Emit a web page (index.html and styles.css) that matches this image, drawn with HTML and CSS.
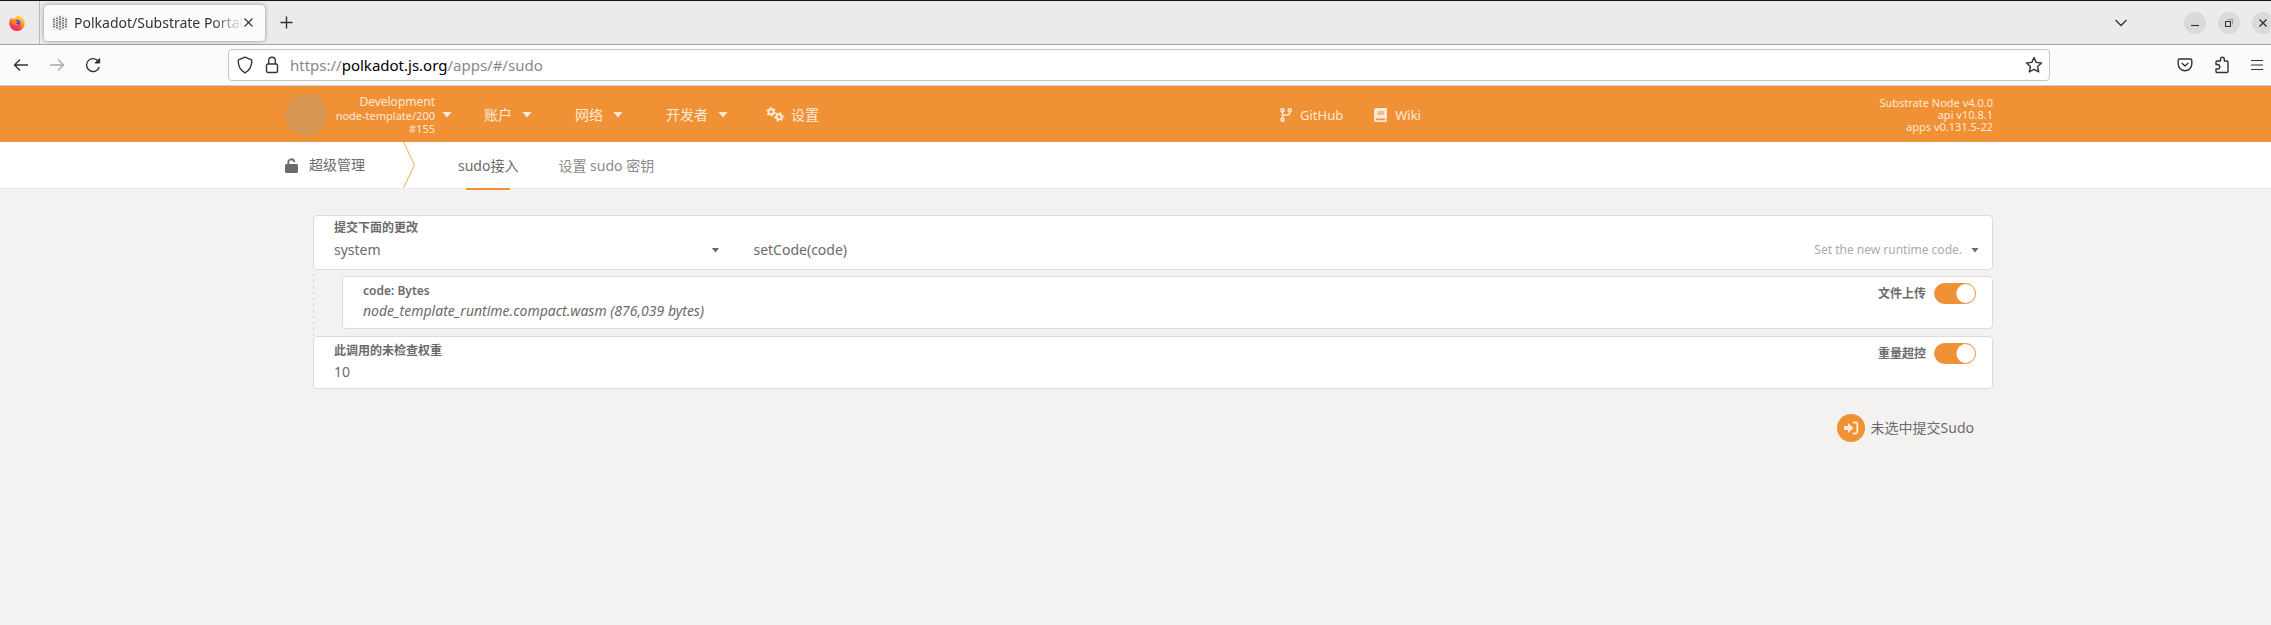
FILE: index.html
```html
<!DOCTYPE html>
<html lang="zh-CN">
<head>
<meta charset="utf-8">
<title>Polkadot/Substrate Portal</title>
<link rel="stylesheet" href="styles.css">
</head>
<body>
<div class="tabbar">
  <div class="pinned">
    <svg width="16" height="16" viewBox="0 0 16 16" aria-label="Firefox">
      <defs>
        <linearGradient id="fx" x1="0.8" y1="0" x2="0.3" y2="1"><stop offset="0" stop-color="#fff04a"/><stop offset=".45" stop-color="#ff9a2b"/><stop offset=".75" stop-color="#ff3b4a"/><stop offset="1" stop-color="#f0207a"/></linearGradient>
      </defs>
      <path fill="url(#fx)" d="M10 0c.2 1.300 1.300 2 2.300 3 .3-.2.300-.7.300-1C14.600 3.500 15.800 6 15.800 8.300A7.800 7.700 0 0 1 .2 8.300C.2 5.800 1.200 4 2.300 2.500c0 .6.200 1 .5 1.300C4 3.300 5.200 3.300 6.200 3.600 7.400 1.500 8.300.6 10 0z"/>
      <circle cx="8" cy="8" r="3.300" fill="#6a3fd8"/>
      <path fill="#ff8a1c" d="M3 5c2-.8 3.600 0 4.300.9 1 .1 2 .2 2 .8C8.600 7.400 7.600 7 7 8c.3 1.300 2 1.600 3.400.8C9.500 11 5.500 11.500 4.300 8.700 3.800 7.500 3.200 6.400 3 5z"/>
    </svg>
  </div>
  <div class="tab">
    <svg width="16" height="16" viewBox="0 0 16 16">
      <rect width="16" height="16" fill="#f1f1f1"/>
      <g fill="none" stroke="#333" stroke-width="1.600" stroke-linecap="round" stroke-dasharray="0 2.400">
        <path d="M2 4.400v7.300M5 3.200v9.700M8 2v12.100M11 3.200v9.700M14 4.400v7.300"/>
      </g>
      <circle cx="8" cy="8" r="1.300" fill="#e070b8"/>
    </svg>
    <span class="tab-title">Polkadot/Substrate Portal</span>
    <button class="plain" aria-label="Close tab"><svg width="9" height="9" viewBox="0 0 9 9" class="line thin"><path d="M.5.5l8 8M8.500.5l-8 8"/></svg></button>
  </div>
  <button class="plain new-tab" aria-label="New tab"><svg width="13" height="13" viewBox="0 0 13 13" class="line"><path d="M6.500 0.500v12M0.500 6.500h12"/></svg></button>
  <div class="window-controls">
    <button class="plain all-tabs" aria-label="All tabs"><svg width="14" height="8" viewBox="0 0 14 8" class="line"><path d="M1.500 1l5.500 5.500L12.500 1"/></svg></button>
    <button class="round" aria-label="Minimize"><svg width="8" height="8" viewBox="0 0 8 8" class="line thin"><path d="M0 6.500h8"/></svg></button>
    <button class="round" aria-label="Restore"><svg width="8" height="8" viewBox="0 0 8 8" class="line thin"><path d="M.5 2.500h5v5h-5z"/><path d="M2.500.5h5v5" stroke="#999"/></svg></button>
    <button class="round" aria-label="Close"><svg width="8" height="8" viewBox="0 0 8 8" class="line"><path d="M.5.5l7 7M7.500.5l-7 7"/></svg></button>
  </div>
</div>
<div class="toolbar">
  <div class="nav-buttons">
    <button class="plain" aria-label="Back"><svg width="16" height="16" viewBox="0 0 16 16" class="line"><path d="M15 8H1.500M7 2.500L1.500 8 7 13.500"/></svg></button>
    <button class="plain faded" aria-label="Forward"><svg width="16" height="16" viewBox="0 0 16 16" class="line"><path d="M1 8h13.500M9 2.500L14.500 8 9 13.500"/></svg></button>
    <button class="plain" aria-label="Reload"><svg width="16" height="16" viewBox="0 0 16 16" class="line"><path d="M13.500 4.500A6.500 6.500 0 1 0 14.300 10"/><path d="M14.700 1.500V6H10z" fill="#333" stroke-width="1"/></svg></button>
  </div>
  <div class="urlbar">
    <svg width="16" height="18" viewBox="0 0 16 18" class="line"><path d="M8 1.200l6 2.500c.6.300.9.700.8 1.300C14.600 10.500 12.500 14.500 8 16.800 3.500 14.500 1.400 10.500 1.200 5c0-.6.200-1 .8-1.300z"/></svg>
    <svg width="14" height="18" viewBox="0 0 14 18" class="line"><rect x="1.500" y="8" width="11" height="8.500" rx="1.500"/><path d="M3.700 8V4.500a3.300 3.300 0 0 1 6.600 0V8"/></svg>
    <div class="url">https://<b>polkadot.js.org</b>/apps/#/sudo</div>
    <button class="plain" aria-label="Bookmark"><svg width="18" height="18" viewBox="0 0 18 18" class="line"><path d="M9 1.500l2.200 4.900 5.300.6-3.900 3.600 1.100 5.300L9 13.300l-4.700 2.600 1.100-5.300L1.500 7l5.300-.6z"/></svg></button>
  </div>
  <div class="tools">
    <button class="plain" aria-label="Pocket"><svg width="16" height="16" viewBox="0 0 16 16" class="line"><path d="M2.500 2h11c.8 0 1.300.5 1.300 1.300V7A6.800 6.800 0 0 1 1.200 7V3.300C1.200 2.500 1.700 2 2.500 2z"/><path d="M4.700 6L8 9l3.300-3"/></svg></button>
    <button class="plain" aria-label="Extensions"><svg width="16" height="18" viewBox="0 0 16 18" class="line"><path d="M2 8.500V6c0-.7.400-1 1-1h3.500V3.200a1.900 1.900 0 0 1 3.800 0V5H13c.7 0 1 .4 1 1v9.500c0 .6-.4 1-1 1H3c-.6 0-1-.4-1-1V13h1.500a2.200 2.200 0 0 0 0-4.500z"/></svg></button>
    <button class="plain" aria-label="Menu"><svg width="12" height="12" viewBox="0 0 12 12" class="line thin"><path d="M0 1.500h12M0 6h12M0 10.500h12"/></svg></button>
  </div>
</div>

<header class="menu">
  <div class="wrap menu-row">
    <button class="chain">
      <span class="chain-logo"></span>
      <span class="chain-info"><span class="chain-name">Development</span><span>node-template/200</span><span>#155</span></span>
      <span class="caret"></span>
    </button>
    <nav class="menu-items">
      <button>账户<span class="caret"></span></button>
      <button>网络<span class="caret"></span></button>
      <button>开发者<span class="caret"></span></button>
      <a href="#settings"><svg width="18" height="15" viewBox="0 0 18 15" fill="none" stroke="currentColor"><circle cx="5" cy="4.800" r="2.500" stroke-width="2"/><circle cx="5" cy="4.800" r="4" stroke-width="1.500" stroke-dasharray="2.200 1.989"/><circle cx="13" cy="9.800" r="2.500" stroke-width="2"/><circle cx="13" cy="9.800" r="4" stroke-width="1.500" stroke-dasharray="2.200 1.989" transform="rotate(30 13 9.800)"/></svg>设置</a>
    </nav>
    <nav class="external">
      <a href="#github"><svg width="12" height="14" viewBox="0 0 12 14" fill="none" stroke="currentColor" stroke-width="1.600"><circle cx="2.500" cy="2.300" r="1.500"/><circle cx="9.700" cy="2.300" r="1.500"/><circle cx="2.500" cy="11.700" r="1.500"/><path d="M2.500 4v6M9.700 4v.8c0 1.500-.8 2.200-2.200 2.200H4.500c-1.300 0-2 .6-2 2"/></svg>GitHub</a>
      <a href="#wiki"><svg width="13" height="14" viewBox="0 0 13 14" fill="currentColor"><path fill-rule="evenodd" d="M2.500 0H12c.6 0 1 .4 1 1v8.500c0 .4-.2.600-.5.800v1.900c.6.300.6 1.800-.4 1.800H2.600A2.600 2.600 0 0 1 0 11.400V2.600C0 1.200 1.100 0 2.500 0zM3.500 3.500v1h6.500v-1zm0 2v1h6.500v-1zM2.600 10.500c-1.200 0-1.200 1.800 0 1.800h8.300v-1.800z"/></svg>Wiki</a>
    </nav>
    <div class="versions"><div>Substrate Node v4.0.0</div><div>api v10.8.1</div><div>apps v0.131.5-22</div></div>
  </div>
</header>

<nav class="tabs">
  <div class="wrap tabs-row">
    <div class="section"><svg width="13" height="15" viewBox="0 0 13 15"><rect x="0" y="6" width="13" height="9" rx="1.500" fill="currentColor"/><path d="M3.300 7V4.200a3 3 0 0 1 5.900-.7" fill="none" stroke="currentColor" stroke-width="1.800" stroke-linecap="round"/></svg>超级管理</div>
    <svg class="divider" width="12" height="46" viewBox="0 0 12 46"><path d="M.5 0L11.500 23 .5 46" fill="none" stroke="#f3a961"/></svg>
    <a class="active" href="#sudo">sudo接入</a>
    <a href="#key">设置 sudo 密钥</a>
  </div>
</nav>

<main class="wrap content">
  <section class="card call">
    <div class="field section-field">
      <label for="section">提交下面的更改</label>
      <div class="picker"><select id="section"><option>system</option></select><span class="caret small"></span></div>
    </div>
    <div class="field method-field">
      <div class="picker"><select id="method" aria-label="method"><option>setCode(code)</option></select><span class="hint">Set the new runtime code.</span><span class="caret small"></span></div>
    </div>
  </section>
  <div class="params">
    <section class="card">
      <div class="field">
        <label for="file">code: Bytes</label>
        <button id="file" class="file">node_template_runtime.compact.wasm (876,039 bytes)</button>
      </div>
      <label class="toggle">文件上传<input type="checkbox" checked></label>
    </section>
  </div>
  <section class="card">
    <div class="field">
      <label for="weight">此调用的未检查权重</label>
      <input id="weight" class="text" type="text" value="10">
    </div>
    <label class="toggle">重量超控<input type="checkbox" checked></label>
  </section>
  <div class="actions">
    <button class="submit"><span class="submit-icon"><svg width="16" height="14" viewBox="0 0 16 14"><path d="M1 5.500q0-.5.500-.5H5V2.700q0-.7.600-.2L10 6.500q.5.500 0 1l-4.400 4q-.6.500-.6-.2V9H1.500Q1 9 1 8.500z" fill="currentColor"/><path d="M10.500 1.500h2.300c.9 0 1.500.6 1.500 1.500v8c0 .9-.6 1.500-1.500 1.500h-2.300" fill="none" stroke="currentColor" stroke-width="1.800" stroke-linecap="round"/></svg></span>未选中提交Sudo</button>
  </div>
</main>
</body>
</html>
```

FILE: styles.css
```css
* { box-sizing: border-box; }
body {
  margin: 0;
  min-height: 100vh;
  background: #f4f2f1;
  color: #6b6b6b;
  font: 14px/20px "Noto Sans", "Noto Sans CJK SC", sans-serif;
}
button, input, select { font: inherit; color: inherit; }
button { border: 0; padding: 0; background: none; }
a { color: inherit; text-decoration: none; }
svg { display: block; flex: none; }
.line { fill: none; stroke: #333; stroke-width: 1.4; stroke-linejoin: round; }
.line.thin { stroke-width: 1.1; }
.plain { display: flex; }
.wrap { max-width: 1715px; margin: 0 auto; }

/* browser frame */
.tabbar {
  display: flex;
  align-items: center;
  height: 45px;
  border-top: 1px solid #17131a;
  border-bottom: 1px solid #a5a5a5;
  background: #ebebeb;
}
.pinned {
  display: flex;
  align-items: center;
  align-self: stretch;
  width: 40px;
  padding-left: 9px;
  border-right: 1px solid #bbb;
}
.tab {
  display: flex;
  align-items: center;
  width: 221px;
  height: 36px;
  margin-left: 4px;
  padding: 0 12px 0 8px;
  border-radius: 4px;
  background: #fbfbfb;
  box-shadow: 0 0 4px rgba(0, 0, 0, .4);
}
.tab-title {
  flex: 1;
  margin-left: 6px;
  overflow: hidden;
  white-space: nowrap;
  color: #333;
  mask-image: linear-gradient(to left, transparent, #000 32px);
}
.new-tab { margin-left: 15px; }
.window-controls { display: flex; align-items: center; gap: 12px; margin-left: auto; margin-right: -3px; }
.all-tabs { margin-right: 44px; }
.round {
  display: flex;
  align-items: center;
  justify-content: center;
  width: 22px;
  height: 22px;
  border-radius: 50%;
  background: #dadada;
}
.toolbar {
  display: flex;
  align-items: center;
  height: 41px;
  padding-right: 8px;
  border-bottom: 1px solid #ccc;
  background: #fbfbfb;
}
.nav-buttons { display: flex; gap: 20px; width: 228px; padding-left: 13px; }
.faded { opacity: .4; }
.urlbar {
  flex: 1;
  display: flex;
  align-items: center;
  height: 32px;
  padding: 0 6px 0 8px;
  border: 1px solid #c4c4c4;
  border-radius: 4px;
  background: #fff;
}
.urlbar svg + svg { margin-left: 12px; }
.url { flex: 1; margin-left: 11px; font-size: 15px; color: #888; }
.url b { font-weight: 400; color: #000; }
.tools { display: flex; align-items: center; gap: 21px; width: 213px; justify-content: flex-end; }

/* app menu */
.menu { background: #f19135; color: #fde9d7; }
.menu-row { display: flex; align-items: center; height: 56px; padding: 1px 0 0 7px; }
.menu-row a, .menu-items button { display: flex; align-items: center; }
.caret {
  width: 10px;
  height: 6px;
  background: currentColor;
  clip-path: polygon(0 0, 100% 0, 50% 100%);
}
.caret.small { width: 8px; height: 5px; }
.chain { display: flex; align-items: center; width: 167px; }
.chain-logo { width: 42px; height: 42px; border-radius: 50%; background: #d99755; }
.chain-info {
  flex: 1;
  display: flex;
  flex-direction: column;
  margin-right: 7px;
  text-align: right;
  font-size: 11px;
  line-height: 13px;
}
.chain-name { font-size: 12px; line-height: 14px; }
.menu-items { display: flex; gap: 43px; margin-left: 32px; }
.menu-items .caret { margin-left: 10px; }
.menu-items a { margin-left: -5px; }
.menu-items svg, .external svg { margin-right: 8px; }
.menu-items svg { margin-right: 7px; }
.external { display: flex; gap: 31px; margin-left: 461px; font-size: 13px; }
.versions { margin-left: auto; text-align: right; font-size: 11px; line-height: 12px; }

/* section tabs */
.tabs { background: #fff; border-bottom: 1px solid #ececec; }
.tabs-row { display: flex; height: 46px; padding-left: 7px; line-height: 48px; }
.section { display: flex; align-items: center; width: 118px; }
.section svg { margin-right: 11px; }
.tabs-row a { margin-left: 40px; color: #8b8b8b; }
.tabs-row a.active {
  height: 48px;
  margin-left: 43px;
  color: #6b6b6b;
  background: linear-gradient(#f19135, #f19135) center bottom / 44px 2px no-repeat;
}

/* form */
.content { padding: 26px 0 0 35px; }
.card {
  display: flex;
  padding: 6px 16px 5px 20px;
  border: 1px solid #dddcdb;
  border-radius: 4px;
  background: #fff;
}
.card.call { padding: 4px 13px 7px 20px; }
.field { flex: 1; }
.field > label { display: block; font-size: 12px; font-weight: 600; line-height: 16px; }
.call label { margin-bottom: 2px; }
.section-field { flex: 0 0 25.5%; padding-right: 34px; }
.method-field { align-self: flex-end; }
.picker { display: flex; align-items: center; height: 24px; }
.picker select { flex: 1; height: 24px; padding: 0; border: 0; background: none; appearance: none; }
.hint { margin-right: 9px; font-size: 12px; color: #aaa; }
.file, .text { display: block; width: 100%; height: 24px; padding: 0; border: 0; outline: 0; background: none; text-align: left; }
.file { font-style: italic; }
.params {
  padding: 6px 0 7px 29px;
  background: repeating-linear-gradient(transparent 0 4px, #d0cfce 4px 6px) 0 0 / 1px 100% no-repeat;
}
.toggle { display: flex; align-items: center; align-self: flex-start; gap: 8px; font-size: 12px; font-weight: 600; }
.toggle input {
  width: 42px;
  height: 21px;
  margin: 0;
  appearance: none;
  border: 1px solid #f19135;
  border-radius: 11px;
  background: radial-gradient(circle at 31px 50%, #fff 9px, #f19135 10px);
}
.actions { display: flex; justify-content: flex-end; padding: 25px 19px 0 0; }
.submit { display: flex; align-items: center; gap: 6px; }
.submit-icon {
  display: flex;
  align-items: center;
  justify-content: center;
  width: 28px;
  height: 28px;
  border-radius: 50%;
  background: #f19135;
  color: #fdebdb;
}
```
